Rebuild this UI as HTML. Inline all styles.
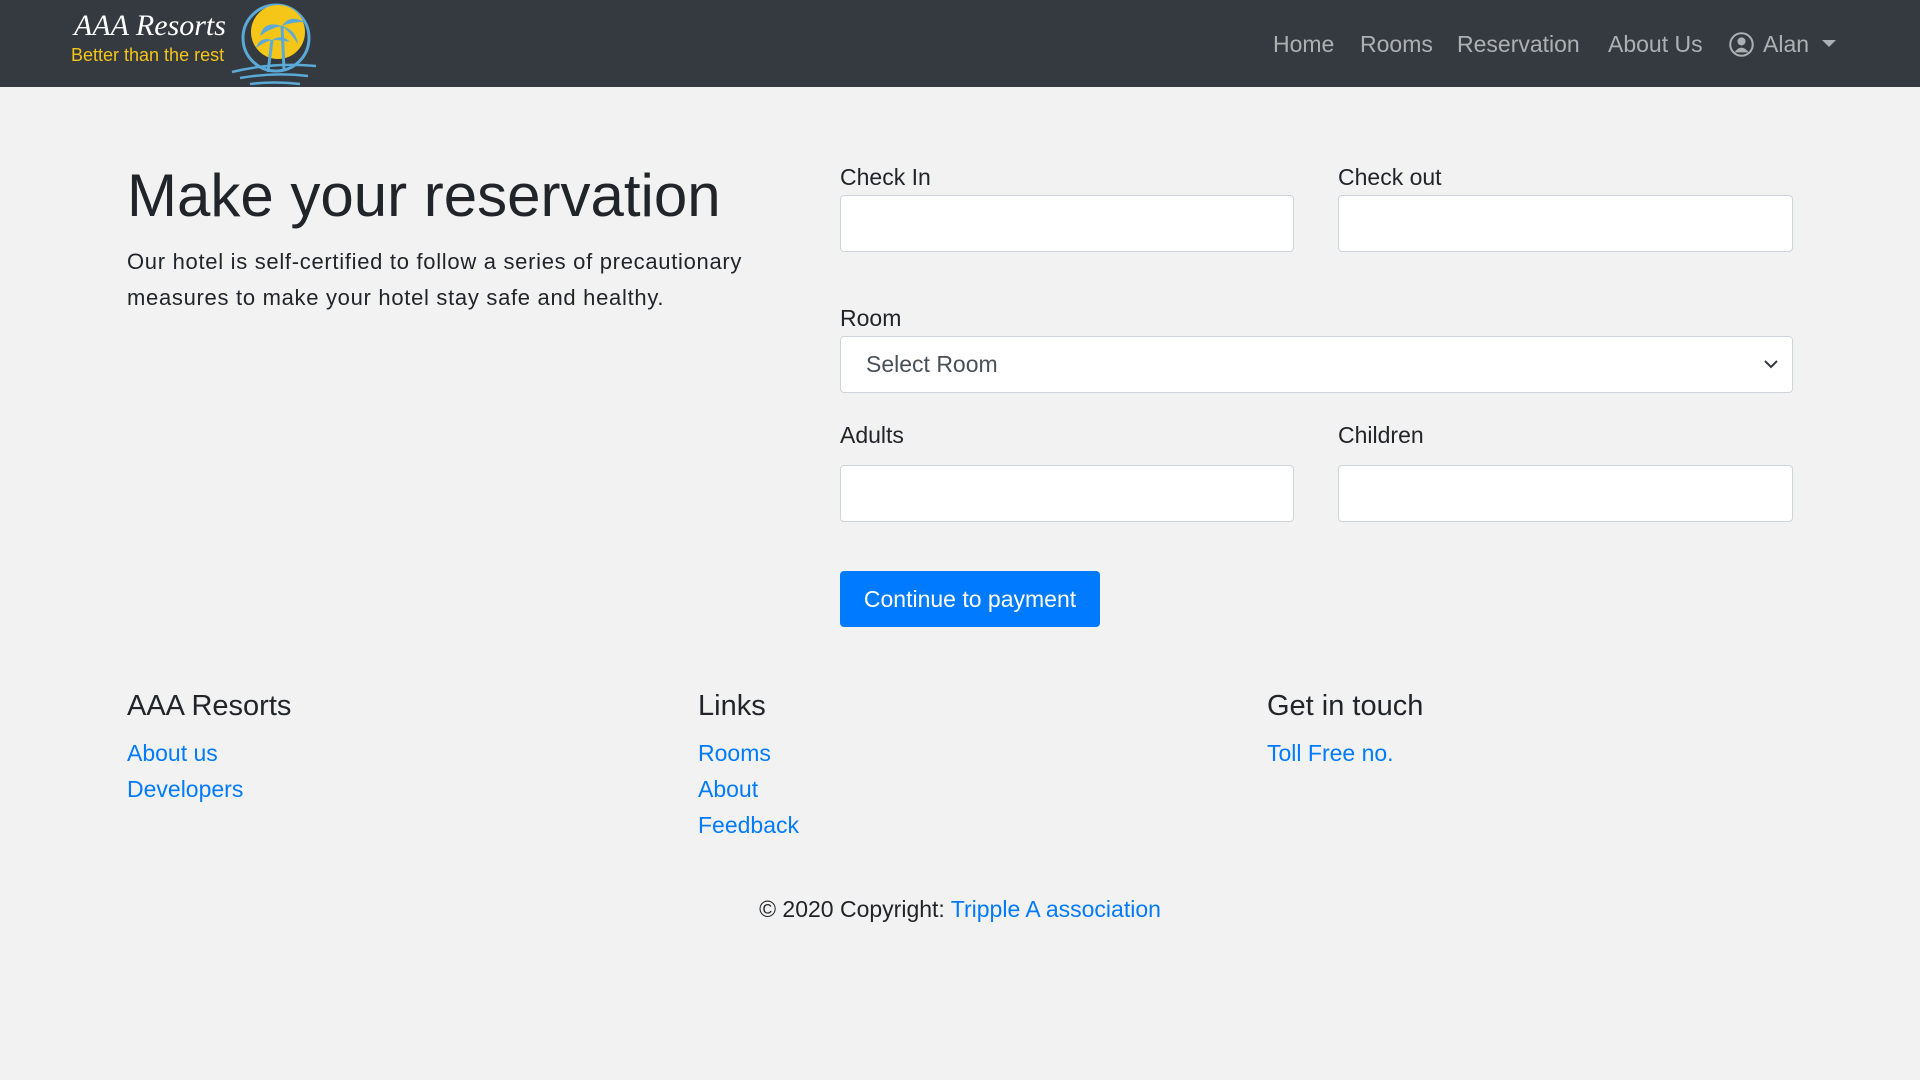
<!DOCTYPE html>
<html><head><meta charset="utf-8"><style>
*{box-sizing:border-box;margin:0;padding:0}
body{width:1920px;height:1080px;background:#f2f2f2;font-family:"Liberation Sans",sans-serif;color:#212529;position:relative;overflow:hidden}
.nav{position:absolute;left:0;top:0;width:1920px;height:87px;background:#343a40}
.nav a{position:absolute;top:30px;font-size:23px;color:rgba(255,255,255,.6);text-decoration:none;line-height:28px}
.abs{position:absolute}
h1{position:absolute;left:127px;top:160px;font-size:60px;font-weight:400;line-height:72px}
p.lead{position:absolute;left:127px;top:244px;width:680px;font-size:22px;line-height:36px;letter-spacing:0.7px}
label{position:absolute;font-size:23px;line-height:28px}
.in{position:absolute;background:#fff;border:1px solid #ced4da;border-radius:4px;height:57px}
.btn{position:absolute;left:840px;top:571px;width:260px;height:56px;background:#007bff;color:#fff;border-radius:4px;font-size:23px;line-height:56px;text-align:center}
h3{position:absolute;font-size:29px;font-weight:400;top:688px;line-height:36px}
.lk{position:absolute;color:#007bff;font-size:23px;line-height:28px}
</style></head><body>
<div class="nav">
 <div class="abs" style="left:74px;top:10px;font-family:'Liberation Serif',serif;font-style:italic;color:#fff;font-size:30px;line-height:32px">AAA Resorts</div>
 <div class="abs" style="left:71px;top:44px;color:#f5c518;font-size:18px;line-height:22px">Better than the rest</div>
 <svg class="abs" style="left:228px;top:2px" width="92" height="84" viewBox="0 0 92 84">
  <circle cx="48" cy="36" r="33" fill="none" stroke="#5aa9d6" stroke-width="3"/>
  <circle cx="50" cy="30" r="27" fill="#f5c518"/>
  <path d="M40 70 L44 38 M56 68 L54 24" stroke="#5aa9d6" stroke-width="3"/>
  <path d="M54 24 q-18 -6 -22 10 q10 -8 22 -10 q8 -12 22 -4 q-12 0 -22 4 q14 4 16 18 q-8 -12 -16 -18z" fill="#5aa9d6"/>
  <path d="M44 38 q-12 -4 -16 8 q8 -6 16 -8 q10 -6 18 2 q-8 -2 -18 -2z" fill="#5aa9d6"/>
  <path d="M4 70 q40 -10 84 -6 M12 76 q35 -6 68 -2 M22 82 q25 -3 50 0" stroke="#5aa9d6" stroke-width="2.5" fill="none"/>
 </svg>
 <a style="left:1273px">Home</a><a style="left:1360px">Rooms</a><a style="left:1457px">Reservation</a><a style="left:1608px">About Us</a>
 <svg class="abs" style="left:1729px;top:32px" width="25" height="25" viewBox="0 0 16 16"><circle cx="8" cy="8" r="7.2" fill="none" stroke="rgba(255,255,255,.6)" stroke-width="1.3"/><circle cx="8" cy="6" r="2.6" fill="rgba(255,255,255,.6)"/><path d="M3.5 13 q4.5 -6 9 0" fill="rgba(255,255,255,.6)"/></svg>
 <a style="left:1763px">Alan</a>
 <div class="abs" style="left:1822px;top:40px;border-left:7px solid transparent;border-right:7px solid transparent;border-top:7px solid rgba(255,255,255,.6)"></div>
</div>
<h1>Make your reservation</h1>
<p class="lead">Our hotel is self-certified to follow a series of precautionary measures to make your hotel stay safe and healthy.</p>
<label style="left:840px;top:163px">Check In</label><label style="left:1338px;top:163px">Check out</label>
<div class="in" style="left:840px;top:195px;width:454px"></div><div class="in" style="left:1338px;top:195px;width:455px"></div>
<label style="left:840px;top:304px">Room</label>
<div class="in" style="left:840px;top:336px;width:953px;font-size:23px;line-height:55px;padding-left:25px;color:#495057">Select Room
 <svg class="abs" style="right:14px;top:22px" width="14" height="10" viewBox="0 0 14 10"><path d="M1 2 L7 8 L13 2" stroke="#343a40" stroke-width="2" fill="none"/></svg></div>
<label style="left:840px;top:421px">Adults</label><label style="left:1338px;top:421px">Children</label>
<div class="in" style="left:840px;top:465px;width:454px"></div><div class="in" style="left:1338px;top:465px;width:455px"></div>
<div class="btn">Continue to payment</div>
<h3 style="left:127px">AAA Resorts</h3><h3 style="left:698px">Links</h3><h3 style="left:1267px">Get in touch</h3>
<div class="lk" style="left:127px;top:739px">About us</div><div class="lk" style="left:127px;top:775px">Developers</div>
<div class="lk" style="left:698px;top:739px">Rooms</div><div class="lk" style="left:698px;top:775px">About</div><div class="lk" style="left:698px;top:811px">Feedback</div>
<div class="lk" style="left:1267px;top:739px">Toll Free no.</div>
<div class="abs" style="left:0;width:1920px;top:895px;text-align:center;font-size:23px;line-height:28px">© 2020 Copyright: <span style="color:#007bff">Tripple A association</span></div>
</body></html>
